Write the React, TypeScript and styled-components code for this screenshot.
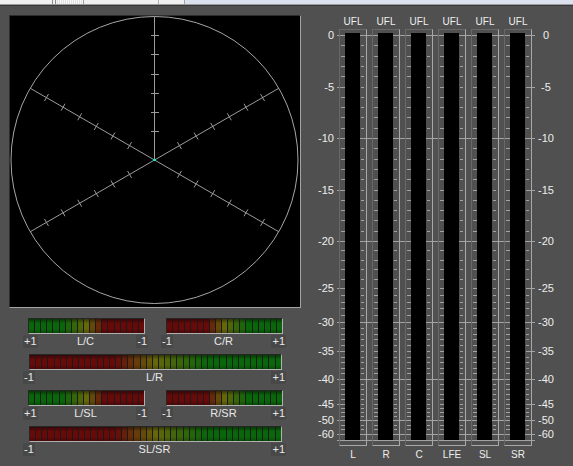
import React from 'react';
import styled, { createGlobalStyle } from 'styled-components';

const GlobalStyle = createGlobalStyle`
  html, body { margin: 0; padding: 0; background: #505050; overflow: hidden; }
  body { font-family: "Liberation Sans", Arial, sans-serif; }
  #root { width: 573px; height: 466px; }
`;

const Page = styled.div`
  width: 573px;
  height: 466px;
  display: flex;
  flex-direction: column;
  background: #505050;
`;

const TopStrip = styled.div`
  height: 4px;
  display: flex;
  border-bottom: 1px solid #9c9c9c;
`;

const StripLeft = styled.div`
  width: 184px;
  background: #f1f1f1;
  border-right: 1px solid #a6a6a6;
  display: flex;
`;

const StripMark = styled.div<{ $ml: number; $w: number; $bg: string }>`
  margin-left: ${(p) => p.$ml}px;
  width: ${(p) => p.$w}px;
  height: 100%;
  background: ${(p) => p.$bg};
`;

const StripRest = styled.div`
  flex: 1;
  background: #dbe2ed;
`;

const Main = styled.div`
  flex: 1;
  display: flex;
  border-top: 1px solid #3a3a3a;
  padding-top: 9px;
`;

const LeftColumn = styled.div`
  margin-left: 9px;
  width: 292px;
  display: flex;
  flex-direction: column;
`;

const ScopeBox = styled.div`
  width: 292px;
  height: 293px;
  box-sizing: border-box;
  background: #000;
  border: 1px solid;
  border-color: #2c2c2c #a4a4a4 #a4a4a4 #2c2c2c;
  svg { display: block; }
`;

const CorrSection = styled.div`
  margin-top: 10px;
  margin-left: 14px;
  width: 263px;
  display: flex;
  flex-direction: column;
  gap: 6px;
`;

const CorrRow = styled.div`
  display: flex;
  justify-content: space-between;
`;

const CorrGroup = styled.div<{ $wide?: boolean }>`
  width: ${(p) => (p.$wide ? 263 : 125)}px;
  display: flex;
  flex-direction: column;
`;

const CorrBar = styled.div<{ $wide?: boolean }>`
  height: 16px;
  box-sizing: border-box;
  margin: 0 ${(p) => (p.$wide ? 4 : 3)}px 0 ${(p) => (p.$wide ? 6 : 5)}px;
  border: 1px solid;
  border-color: #262626 #b0b0b0 #b0b0b0 #262626;
  background: #1a1a1a;
  display: flex;
  gap: 1px;
`;

const Segment = styled.div<{ $c: string }>`
  flex: 1;
  background:
    linear-gradient(to bottom, rgba(0,0,0,0.45) 0%, rgba(0,0,0,0) 30%, rgba(0,0,0,0) 70%, rgba(0,0,0,0.25) 100%),
    ${(p) => p.$c};
`;

const LabelRow = styled.div`
  margin-top: 1px;
  height: 13px;
  display: grid;
  grid-template-columns: 1fr auto 1fr;
  align-items: center;
  font-size: 11px;
  line-height: 13px;
  color: #e8e8e8;
`;

const SignLabel = styled.span<{ $end?: boolean }>`
  justify-self: ${(p) => (p.$end ? 'end' : 'start')};
  background: #484848;
  padding: 0 1px;
`;

const NameLabel = styled.span`
  justify-self: center;
`;

const RightSection = styled.div`
  display: flex;
`;

const Scale = styled.div<{ $w: number }>`
  position: relative;
  width: ${(p) => p.$w}px;
  height: 447px;
`;

const ScaleLabel = styled.span<{ $side: 'left' | 'right' }>`
  position: absolute;
  left: 0;
  right: 0;
  height: 12px;
  line-height: 12px;
  font-size: 11px;
  color: #eeeeee;
  text-align: ${(p) => (p.$side === 'left' ? 'right' : 'center')};
`;

const MeterGroup = styled.div`
  position: relative;
  margin-left: 3px;
  width: 198px;
  box-sizing: border-box;
  padding: 0 3px 0 2px;
  display: flex;
  gap: 5px;
`;

const ScaleDrawing = styled.svg`
  position: absolute;
  left: 0;
  top: 0;
  z-index: 0;
  pointer-events: none;
`;

const Channel = styled.div`
  position: relative;
  z-index: 1;
  width: 28px;
  display: flex;
  flex-direction: column;
`;

const ChannelText = styled.div<{ $mt?: number }>`
  margin-top: ${(p) => p.$mt ?? 0}px;
  height: 14px;
  line-height: 14px;
  text-align: center;
  font-size: 10px;
  color: #eeeeee;
`;

const Frame = styled.div`
  height: 417px;
  box-sizing: border-box;
  border: 1px solid;
  border-color: #686868 #a8a8a8 #a8a8a8 #686868;
  padding: 3px 6px 5px 5px;
  display: flex;
`;

const BlackBar = styled.div`
  flex: 1;
  background: #000;
`;

/* ---------- data ---------- */

const anchors: [number, number][] = [
  [0, 35], [-5, 86.5], [-10, 138], [-15, 189.5], [-20, 241], [-25, 288],
  [-30, 322], [-35, 351], [-40, 379], [-45, 404], [-50, 420], [-60, 434],
];

function dbToY(db: number): number {
  for (let i = 0; i < anchors.length - 1; i++) {
    const [d0, y0] = anchors[i];
    const [d1, y1] = anchors[i + 1];
    if (db <= d0 && db >= d1) {
      return y0 + ((db - d0) / (d1 - d0)) * (y1 - y0);
    }
  }
  return 434;
}

const majorLabels = [0, -5, -10, -15, -20, -25, -30, -35, -40, -45, -50, -60];
const longLines = [0, -10, -20, -30, -40, -50, -60];
const mediumLines = [-5, -15, -25, -35, -45];
const minorTicks: number[] = [];
for (let d = -1; d > -45; d--) if (d % 5 !== 0) minorTicks.push(d);
minorTicks.push(-46.25, -47.5, -48.75, -53.33, -56.67);

const channels = ['L', 'R', 'C', 'LFE', 'SL', 'SR'];
const GROUP_TOP = 15;
const GROUP_LEFT = 337;

const rowY = (db: number) => Math.round(dbToY(db)) - GROUP_TOP + 0.5;

function segColor(t: number): string {
  let h: number;
  if (t <= 0.3) h = 120;
  else if (t <= 0.5) h = 120 - ((t - 0.3) / 0.2) * 60;
  else if (t <= 0.66) h = 60 - ((t - 0.5) / 0.16) * 60;
  else h = 0;
  return `hsl(${h.toFixed(1)}, 82%, 22%)`;
}

const Meter: React.FC<{ n: number; greenLeft: boolean; wide?: boolean }> = ({ n, greenLeft, wide }) => (
  <CorrBar $wide={wide}>
    {Array.from({ length: n }, (_, i) => {
      const p = (i + 0.5) / n;
      return <Segment key={i} $c={segColor(greenLeft ? p : 1 - p)} />;
    })}
  </CorrBar>
);

const CorrMeter: React.FC<{ name: string; left: string; right: string; greenLeft: boolean; wide?: boolean }> = ({
  name, left, right, greenLeft, wide,
}) => (
  <CorrGroup $wide={wide}>
    <Meter n={wide ? 41 : 19} greenLeft={greenLeft} wide={wide} />
    <LabelRow>
      <SignLabel>{left}</SignLabel>
      <NameLabel>{name}</NameLabel>
      <SignLabel $end>{right}</SignLabel>
    </LabelRow>
  </CorrGroup>
);

const Vectorscope: React.FC = () => {
  const cx = 144.5;
  const cy = 144;
  const R = 143.5;
  const rays = [90, 30, 150, 210, 330];
  const ds = [1, 2, 3, 4, 5, 6].map((k) => 19.2 * (k + 0.5));
  return (
    <svg width={290} height={291} viewBox="0 0 290 291">
      <circle cx={cx} cy={cy} r={R} fill="none" stroke="#a6a6a6" strokeWidth={1} />
      {rays.map((a) => {
        const rad = (a * Math.PI) / 180;
        const dx = Math.cos(rad);
        const dy = -Math.sin(rad);
        const nx = Math.sin(rad);
        const ny = Math.cos(rad);
        const vertical = a === 90;
        return (
          <g key={a} stroke="#9c9c9c" strokeWidth={1} shapeRendering={vertical ? 'crispEdges' : 'auto'}>
            <line x1={cx} y1={cy} x2={cx + R * dx} y2={cy + R * dy} />
            {ds.map((d) => {
              const px = cx + d * dx;
              const py = cy + d * dy;
              return (
                <line
                  key={d}
                  x1={px - 4 * nx}
                  y1={vertical ? Math.round(py) + 0.5 : py - 4 * ny}
                  x2={px + 4 * nx}
                  y2={vertical ? Math.round(py) + 0.5 : py + 4 * ny}
                />
              );
            })}
          </g>
        );
      })}
      <rect x={143} y={143} width={3} height={2} fill="#22e4d2" />
    </svg>
  );
};

const MeterScaleDrawing: React.FC = () => {
  const W = 198;
  const H = 447;
  const colX = (i: number) => 339 + 33 * i - GROUP_LEFT;
  const ticks = (db: number, key: string) =>
    channels.map((_, i) => {
      const y = rowY(db);
      const x = colX(i);
      return (
        <g key={`${key}-${i}`}>
          <line x1={x + 2} y1={y} x2={x + 6} y2={y} />
          <line x1={x + 22} y1={y} x2={x + 25} y2={y} />
        </g>
      );
    });
  return (
    <ScaleDrawing width={W} height={H} viewBox={`0 0 ${W} ${H}`}>
      <g stroke="#a2a2a2" strokeWidth={1} shapeRendering="crispEdges">
        {longLines.map((db) => (
          <line key={`L${db}`} x1={0} y1={rowY(db)} x2={W} y2={rowY(db)} />
        ))}
        <line x1={0} y1={440 - GROUP_TOP + 0.5} x2={W} y2={440 - GROUP_TOP + 0.5} />
        {mediumLines.map((db) => (
          <g key={`M${db}`}>
            <line x1={0} y1={rowY(db)} x2={8} y2={rowY(db)} />
            <line x1={189} y1={rowY(db)} x2={W} y2={rowY(db)} />
          </g>
        ))}
        {mediumLines.map((db) => ticks(db, `m${db}`))}
        {minorTicks.map((db) => ticks(db, `t${db}`))}
      </g>
    </ScaleDrawing>
  );
};

const ScaleColumn: React.FC<{ side: 'left' | 'right'; w: number }> = ({ side, w }) => (
  <Scale $w={w}>
    {majorLabels.map((db) => (
      <ScaleLabel key={db} $side={side} style={{ top: Math.round(dbToY(db)) - GROUP_TOP - 6 }}>
        {db === 0 ? '0' : `${db}`}
      </ScaleLabel>
    ))}
  </Scale>
);

export default function App() {
  return (
    <Page>
      <GlobalStyle />
      <TopStrip>
        <StripLeft>
          <StripMark $ml={52} $w={1} $bg="#8c8c8c" />
          <StripMark $ml={2} $w={1} $bg="#8c8c8c" />
          <StripMark
            $ml={1}
            $w={26}
            $bg="repeating-linear-gradient(90deg, #e2e2e2 0 1px, #f7f7f7 1px 2px)"
          />
          <StripMark $ml={0} $w={1} $bg="#a0a0a0" />
          <StripMark $ml={74} $w={1} $bg="#b0b0b0" />
        </StripLeft>
        <StripRest />
      </TopStrip>
      <Main>
        <LeftColumn>
          <ScopeBox>
            <Vectorscope />
          </ScopeBox>
          <CorrSection>
            <CorrRow>
              <CorrMeter name="L/C" left="+1" right="-1" greenLeft />
              <CorrMeter name="C/R" left="-1" right="+1" greenLeft={false} />
            </CorrRow>
            <CorrRow>
              <CorrMeter name="L/R" left="-1" right="+1" greenLeft={false} wide />
            </CorrRow>
            <CorrRow>
              <CorrMeter name="L/SL" left="+1" right="-1" greenLeft />
              <CorrMeter name="R/SR" left="-1" right="+1" greenLeft={false} />
            </CorrRow>
            <CorrRow>
              <CorrMeter name="SL/SR" left="-1" right="+1" greenLeft={false} wide />
            </CorrRow>
          </CorrSection>
        </LeftColumn>
        <RightSection>
          <ScaleColumn side="left" w={33} />
          <MeterGroup>
            <MeterScaleDrawing />
            {channels.map((c) => (
              <Channel key={c}>
                <ChannelText>UFL</ChannelText>
                <Frame>
                  <BlackBar />
                </Frame>
                <ChannelText $mt={2}>{c}</ChannelText>
              </Channel>
            ))}
          </MeterGroup>
          <ScaleColumn side="right" w={22} />
        </RightSection>
      </Main>
    </Page>
  );
}
